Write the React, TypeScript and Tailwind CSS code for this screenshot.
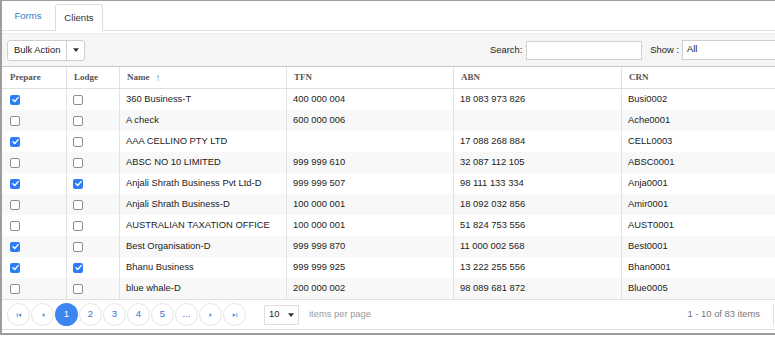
import React from "react";

type Row = {
  prepare: boolean;
  lodge: boolean;
  name: string;
  tfn: string;
  abn: string;
  crn: string;
};

const ROWS: Row[] = [
  { prepare: true, lodge: false, name: "360 Business-T", tfn: "400 000 004", abn: "18 083 973 826", crn: "Busi0002" },
  { prepare: false, lodge: false, name: "A check", tfn: "600 000 006", abn: "", crn: "Ache0001" },
  { prepare: true, lodge: false, name: "AAA CELLINO PTY LTD", tfn: "", abn: "17 088 268 884", crn: "CELL0003" },
  { prepare: false, lodge: false, name: "ABSC NO 10 LIMITED", tfn: "999 999 610", abn: "32 087 112 105", crn: "ABSC0001" },
  { prepare: true, lodge: true, name: "Anjali Shrath Business Pvt Ltd-D", tfn: "999 999 507", abn: "98 111 133 334", crn: "Anja0001" },
  { prepare: false, lodge: false, name: "Anjali Shrath Business-D", tfn: "100 000 001", abn: "18 092 032 856", crn: "Amir0001" },
  { prepare: false, lodge: false, name: "AUSTRALIAN TAXATION OFFICE", tfn: "100 000 001", abn: "51 824 753 556", crn: "AUST0001" },
  { prepare: true, lodge: false, name: "Best Organisation-D", tfn: "999 999 870", abn: "11 000 002 568", crn: "Best0001" },
  { prepare: true, lodge: true, name: "Bhanu Business", tfn: "999 999 925", abn: "13 222 255 556", crn: "Bhan0001" },
  { prepare: false, lodge: false, name: "blue whale-D", tfn: "200 000 002", abn: "98 089 681 872", crn: "Blue0005" },
];

function Box({ on }: { on: boolean }) {
  if (on) {
    return (
      <span className="inline-flex w-[10px] h-[10px] rounded-[2px] bg-[#2d7cf6] items-center justify-center">
        <svg viewBox="0 0 10 10" className="w-[9px] h-[9px]">
          <path d="M2.2 5.3 4.2 7.2 7.9 2.9" fill="none" stroke="white" strokeWidth="1.6" strokeLinecap="round" strokeLinejoin="round" />
        </svg>
      </span>
    );
  }
  return <span className="inline-block w-[10px] h-[10px] rounded-[2px] border border-[#8f8f8f] bg-white" />;
}

function Caret() {
  return (
    <svg viewBox="0 0 8 5" className="w-[6px] h-[4px]">
      <path d="M0 0h8L4 5z" fill="#333" />
    </svg>
  );
}

function PagerIcon({ kind }: { kind: "first" | "prev" | "next" | "last" }) {
  return (
    <svg viewBox="0 0 8 8" className="w-[6px] h-[6px]">
      {kind === "first" && (
        <>
          <rect x="1" y="1.5" width="1.2" height="5" fill="#5b8fd6" />
          <path d="M7 1.5v5L3 4z" fill="#5b8fd6" />
        </>
      )}
      {kind === "prev" && <path d="M6 1.5v5L2.5 4z" fill="#5b8fd6" />}
      {kind === "next" && <path d="M2 1.5v5L5.5 4z" fill="#5b8fd6" />}
      {kind === "last" && (
        <>
          <path d="M1 1.5v5L5 4z" fill="#5b8fd6" />
          <rect x="5.8" y="1.5" width="1.2" height="5" fill="#5b8fd6" />
        </>
      )}
    </svg>
  );
}

function PageBtn({ children, active }: { children: React.ReactNode; active?: boolean }) {
  return (
    <span
      className={
        active
          ? "w-[23px] h-[23px] rounded-full bg-[#3d86f2] text-white flex items-center justify-center text-[9.5px]"
          : "w-[23px] h-[23px] rounded-full border border-[#e3e3e3] text-[#2f73cf] flex items-center justify-center text-[9.5px] bg-white"
      }
    >
      {children}
    </span>
  );
}

export default function App() {
  return (
    <div className="w-[775px] h-[337px] bg-white overflow-hidden font-['Liberation_Sans',Arial,sans-serif] text-[9.4px] text-[#222]">
      <div className="h-[335px] border-t border-l-2 border-b-2 border-[#9d9d9d] flex flex-col">
        {/* Tabs */}
        <div className="h-[29px] flex items-end shrink-0">
          <div className="h-[27px] w-[52px] flex items-center justify-center text-[#3b7bc4] text-[9.6px]">Forms</div>
          <div className="h-[27px] w-[48px] ml-[1px] flex items-center justify-center bg-white border border-b-0 border-[#dcdcdc] rounded-t-[3px] text-[#333] text-[9.6px] relative top-[1px]">
            Clients
          </div>
        </div>
        <div className="border-t border-[#e2e2e2] h-[3px] shrink-0" />

        {/* Toolbar */}
        <div className="h-[33px] shrink-0 bg-[#f5f5f5] border-t border-[#ececec] flex items-center pl-[5px]">
          <div className="flex h-[21px] bg-white border border-[#cfcfcf] rounded-[3px]">
            <span className="px-[6px] flex items-center text-[#222]">Bulk Action</span>
            <span className="w-[18px] border-l border-[#cfcfcf] flex items-center justify-center">
              <Caret />
            </span>
          </div>
          <div className="ml-auto flex items-center">
            <span className="text-[#222]">Search:</span>
            <span className="ml-[4px] w-[116px] h-[19px] bg-white border border-[#cfcfcf]" />
            <span className="ml-[8px] text-[#222]">Show :</span>
            <span className="ml-[3px] w-[93px] h-[20px] bg-white border border-[#cfcfcf] border-r-0 pl-[4px] pt-[1px] text-[#222]">All</span>
          </div>
        </div>

        {/* Table */}
        <div className="border-t border-[#c9c9c9] shrink-0">
          <div className="grid grid-cols-[65px_53px_167px_167px_168px_1fr] h-[22px] border-b border-[#e0e0e0] font-['Liberation_Serif','Times_New_Roman',serif] font-bold text-[9px] text-[#555]">
            <div className="flex items-center pl-[8px] border-r border-[#e0e0e0]">Prepare</div>
            <div className="flex items-center pl-[7px] border-r border-[#e0e0e0]">Lodge</div>
            <div className="flex items-center pl-[7px] border-r border-[#e0e0e0]">
              Name
              <span className="ml-[6px] text-[#3a7bd5] font-['Liberation_Sans',Arial,sans-serif] font-bold text-[10px]">↑</span>
            </div>
            <div className="flex items-center pl-[7px] border-r border-[#e0e0e0]">TFN</div>
            <div className="flex items-center pl-[7px] border-r border-[#e0e0e0]">ABN</div>
            <div className="flex items-center pl-[7px]">CRN</div>
          </div>
          {ROWS.map((r, i) => (
            <div
              key={r.crn}
              className={
                "grid grid-cols-[65px_53px_167px_167px_168px_1fr] h-[21px] " +
                (i % 2 === 1 ? "bg-[#f8f8f8]" : "bg-white")
              }
            >
              <div className="flex items-center pl-[8px] border-r border-[#e3e3e3]">
                <Box on={r.prepare} />
              </div>
              <div className="flex items-center pl-[6px] border-r border-[#e3e3e3]">
                <Box on={r.lodge} />
              </div>
              <div className="flex items-center pl-[6px] border-r border-[#e3e3e3] whitespace-nowrap">{r.name}</div>
              <div className="flex items-center pl-[6px] border-r border-[#e3e3e3]">{r.tfn}</div>
              <div className="flex items-center pl-[6px] border-r border-[#e3e3e3]">{r.abn}</div>
              <div className="flex items-center pl-[6px]">{r.crn}</div>
            </div>
          ))}
        </div>

        {/* Footer */}
        <div className="h-[31px] shrink-0 border-t border-b border-[#e0e0e0] flex items-center pl-[5px] pr-[1px]">
          <div className="flex items-center gap-[1px]">
            <PageBtn><PagerIcon kind="first" /></PageBtn>
            <PageBtn><PagerIcon kind="prev" /></PageBtn>
            <PageBtn active>1</PageBtn>
            <PageBtn>2</PageBtn>
            <PageBtn>3</PageBtn>
            <PageBtn>4</PageBtn>
            <PageBtn>5</PageBtn>
            <PageBtn>...</PageBtn>
            <PageBtn><PagerIcon kind="next" /></PageBtn>
            <PageBtn><PagerIcon kind="last" /></PageBtn>
          </div>
          <div className="ml-[18px] w-[35px] h-[20px] border border-[#dedede] flex items-center justify-between px-[4px]">
            <span className="text-[#222]">10</span>
            <Caret />
          </div>
          <span className="ml-[10px] text-[#9a9a9a]">items per page</span>
          <span className="ml-auto text-[#777]">1 - 10 of 83 items</span>
          <span className="ml-[13px] h-[22px] border-l border-[#e3e3e3]" />
        </div>
      </div>
    </div>
  );
}
